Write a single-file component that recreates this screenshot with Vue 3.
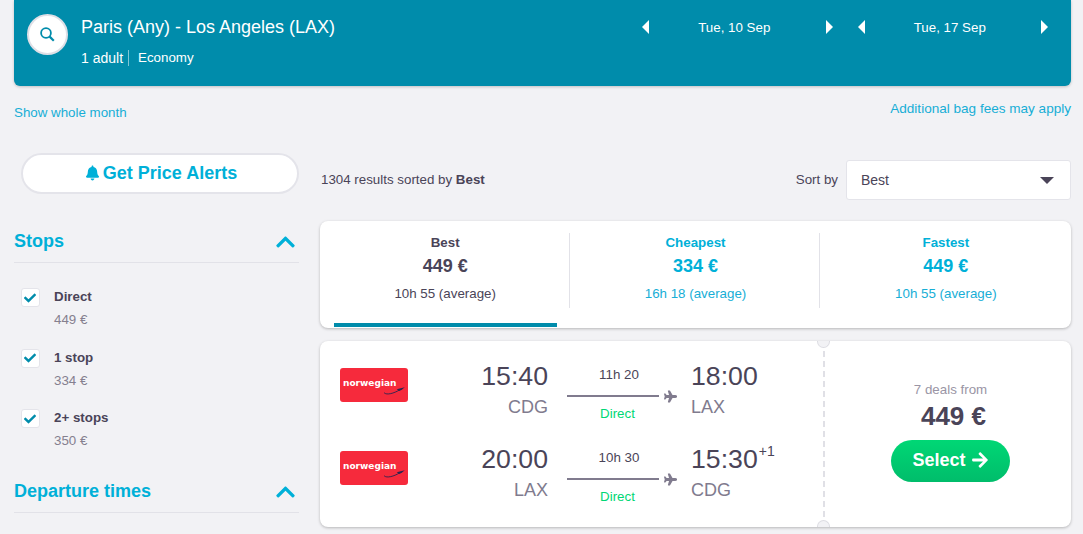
<script setup>
import { ref } from "vue";

const stops = ref([
  { label: "Direct", price: "449 €", checked: true },
  { label: "1 stop", price: "334 €", checked: true },
  { label: "2+ stops", price: "350 €", checked: true },
]);

const activeTab = ref("Best");
const tabs = [
  { name: "Best", price: "449 €", time: "10h 55 (average)" },
  { name: "Cheapest", price: "334 €", time: "16h 18 (average)" },
  { name: "Fastest", price: "449 €", time: "10h 55 (average)" },
];

const dates = ["Tue, 10 Sep", "Tue, 17 Sep"];

const legs = [
  { dep: "15:40", from: "CDG", duration: "11h 20", arr: "18:00", to: "LAX" },
  { dep: "20:00", from: "LAX", duration: "10h 30", arr: "15:30", to: "CDG", plus: "+1" },
];
</script>

<template>
  <div class="page">
    <header class="search-bar">
      <div class="search-left">
        <button class="search-btn" aria-label="Search">
          <svg class="search-icon" viewBox="0 0 15 15">
            <circle cx="6" cy="6" r="4.9" />
            <line x1="9.600" y1="9.600" x2="13.800" y2="13.800" />
          </svg>
        </button>
        <div>
          <div class="route">Paris (Any) - Los Angeles (LAX)</div>
          <div class="trip-info">
            <span class="adults">1 adult</span>
            <span>Economy</span>
          </div>
        </div>
      </div>
      <div class="date-navs">
        <div v-for="date in dates" :key="date" class="date-nav">
          <span class="arrow arrow-left"></span>
          <span class="date-text">{{ date }}</span>
          <span class="arrow arrow-right"></span>
        </div>
      </div>
    </header>

    <div class="sub-links">
      <a class="link month-link">Show whole month</a>
      <a class="link bag-link">Additional bag fees may apply</a>
    </div>

    <div class="columns">
      <!-- Left side -->
      <aside class="sidebar">
        <button class="alerts-btn">
          <svg class="bell" viewBox="0 0 448 512">
            <path d="M224 512c35.32 0 63.97-28.65 63.97-64H160.03c0 35.35 28.65 64 63.97 64zm215.39-149.71c-19.32-20.76-55.47-51.99-55.47-154.29 0-77.7-54.48-139.9-127.94-155.16V32c0-17.67-14.32-32-31.98-32s-31.98 14.33-31.98 32v20.84C118.56 68.1 64.08 130.3 64.08 208c0 102.3-36.15 133.53-55.47 154.29-6 6.45-8.66 14.16-8.61 21.71.11 16.4 12.98 32 32.1 32h383.8c19.12 0 32-15.6 32.1-32 .05-7.55-2.61-15.27-8.61-21.71z" />
          </svg>
          Get Price Alerts
        </button>

        <div class="filter-head stops-head">
          <span>Stops</span>
          <svg class="chevron" viewBox="0 0 448 512">
            <path d="M240.971 130.524l194.343 194.343c9.373 9.373 9.373 24.569 0 33.941l-22.667 22.667c-9.357 9.357-24.522 9.375-33.901.04L224 227.495 69.255 381.516c-9.379 9.335-24.544 9.317-33.901-.04l-22.667-22.667c-9.373-9.373-9.373-24.569 0-33.941L207.03 130.525c9.372-9.373 24.568-9.373 33.941-.001z" />
          </svg>
        </div>

        <ul class="stop-list">
          <li v-for="stop in stops" :key="stop.label" class="stop-item">
            <span class="checkbox">
              <svg v-if="stop.checked" class="check" viewBox="0 0 512 512">
                <path d="M173.898 439.404l-166.4-166.4c-9.997-9.997-9.997-26.206 0-36.204l36.203-36.204c9.997-9.998 26.207-9.998 36.204 0L192 312.69 432.095 72.596c9.997-9.997 26.207-9.997 36.204 0l36.203 36.204c9.997 9.997 9.997 26.206 0 36.204l-294.4 294.401c-9.998 9.997-26.207 9.997-36.204-.001z" />
              </svg>
            </span>
            <div class="stop-text">
              <div class="stop-label">{{ stop.label }}</div>
              <div class="stop-price">{{ stop.price }}</div>
            </div>
          </li>
        </ul>

        <div class="filter-head">
          <span>Departure times</span>
          <svg class="chevron" viewBox="0 0 448 512">
            <path d="M240.971 130.524l194.343 194.343c9.373 9.373 9.373 24.569 0 33.941l-22.667 22.667c-9.357 9.357-24.522 9.375-33.901.04L224 227.495 69.255 381.516c-9.379 9.335-24.544 9.317-33.901-.04l-22.667-22.667c-9.373-9.373-9.373-24.569 0-33.941L207.03 130.525c9.372-9.373 24.568-9.373 33.941-.001z" />
          </svg>
        </div>
      </aside>

      <!-- Right side -->
      <main class="results">
        <div class="results-top">
          <div class="count">1304 results sorted by <b>Best</b></div>
          <div class="sort">
            <span class="sort-label">Sort by</span>
            <div class="select">
              <span>Best</span>
              <span class="caret"></span>
            </div>
          </div>
        </div>

        <div class="tabs">
          <div
            v-for="tab in tabs"
            :key="tab.name"
            class="tab"
            :class="{ active: tab.name === activeTab }"
            @click="activeTab = tab.name"
          >
            <div class="tab-name">{{ tab.name }}</div>
            <div class="tab-price">{{ tab.price }}</div>
            <div class="tab-time">{{ tab.time }}</div>
          </div>
        </div>

        <div class="ticket">
          <div class="legs">
            <div v-for="leg in legs" :key="leg.dep" class="leg">
              <div class="airline">
                <span class="airline-name">norwegian</span>
                <svg class="swoosh" viewBox="0 0 24 10">
                  <path d="M1 7.500C4 10.500 12 8 18 4.500" fill="none" stroke="#2a2550" stroke-width="1" />
                  <path d="M15 3.500L24 1.500L21 4L18 5.500Z" fill="#2a2550" />
                </svg>
              </div>
              <div class="place place-dep">
                <div class="time">{{ leg.dep }}</div>
                <div class="code">{{ leg.from }}</div>
              </div>
              <div class="middle">
                <div class="duration">{{ leg.duration }}</div>
                <div class="track">
                  <span class="track-line"></span>
                  <svg class="plane" viewBox="0 0 576 512">
                    <path d="M480 192H365.71L260.61 8.06A16.014 16.014 0 0 0 246.71 0h-65.5c-10.63 0-18.3 10.17-15.38 20.39L214.86 192H112l-43.2-57.6c-3.02-4.03-7.77-6.4-12.8-6.4H16.01C5.6 128-2.04 137.78.49 147.88L32 256 .49 364.12C-2.04 374.22 5.6 384 16.01 384H56c5.04 0 9.78-2.37 12.8-6.4L112 320h102.86l-49.03 171.6c-2.92 10.22 4.75 20.4 15.38 20.4h65.5c5.74 0 11.04-3.08 13.89-8.06L365.71 320H480c35.35 0 96-28.65 96-64s-60.65-64-96-64z" />
                  </svg>
                </div>
                <div class="direct">Direct</div>
              </div>
              <div class="place">
                <div class="time">{{ leg.arr }}<sup v-if="leg.plus" class="plus">{{ leg.plus }}</sup></div>
                <div class="code">{{ leg.to }}</div>
              </div>
            </div>
          </div>

          <div class="deal">
            <span class="notch notch-top"></span>
            <span class="notch notch-bottom"></span>
            <div class="deal-count">7 deals from</div>
            <div class="deal-price">449 €</div>
            <button class="select-btn">
              Select
              <svg class="btn-arrow" viewBox="0 0 448 512">
                <path d="M190.5 66.9l22.2-22.2c9.4-9.4 24.6-9.4 33.9 0L441 239c9.4 9.4 9.4 24.6 0 33.9L246.6 467.3c-9.4 9.4-24.6 9.4-33.9 0l-22.2-22.2c-9.5-9.5-9.3-25 .4-34.3L311.4 296H24c-13.3 0-24-10.7-24-24v-32c0-13.3 10.7-24 24-24h287.4L190.9 101.2c-9.8-9.3-10-24.8-.4-34.3z" />
              </svg>
            </button>
          </div>
        </div>
      </main>
    </div>
  </div>
</template>

<style>
html,
body {
  margin: 0;
  background: #f2f2f5;
  overflow: hidden;
}
</style>

<style scoped>
.page {
  box-sizing: border-box;
  width: 1083px;
  height: 534px;
  padding: 0 12px 0 14px;
  overflow: hidden;
  background: #f2f2f5;
  color: #4a4458;
  font-family: "Liberation Sans", Arial, sans-serif;
  font-size: 13.33px;
}

button {
  font-family: inherit;
  cursor: pointer;
}

/* Top search summary */
.search-bar {
  display: flex;
  justify-content: space-between;
  height: 86px;
  background: #008cab;
  border-radius: 0 0 6px 6px;
  box-shadow: 0 1px 3px rgba(0, 0, 0, 0.2);
  color: #fff;
}

.search-left {
  display: flex;
  padding: 14px 0 0 13px;
}

.search-btn {
  display: flex;
  align-items: center;
  justify-content: center;
  width: 41px;
  height: 41px;
  margin-right: 13px;
  padding: 0;
  background: #fff;
  border: 2px solid #dfdfe6;
  border-radius: 50%;
}

.search-icon {
  width: 15px;
  height: 15px;
  fill: none;
  stroke: #008cab;
  stroke-width: 1.8;
}

.search-icon line {
  stroke-width: 2.2;
}

.route {
  font-size: 18px;
  line-height: 26px;
}

.trip-info {
  display: flex;
  margin-top: 10px;
  line-height: 16px;
}

.adults {
  margin-right: 9px;
  padding-right: 5px;
  border-right: 1px solid rgba(255, 255, 255, 0.5);
  font-size: 14px;
}

.date-navs {
  display: flex;
  gap: 25px;
  padding: 19px 23px 0 0;
}

.date-nav {
  display: flex;
  align-items: center;
  justify-content: space-between;
  width: 190.5px;
  height: 16px;
}

.date-text {
  padding-right: 6px;
}

.arrow {
  width: 0;
  height: 0;
  border-top: 7px solid transparent;
  border-bottom: 7px solid transparent;
}

.arrow-left {
  border-right: 7px solid #fff;
}

.arrow-right {
  border-left: 7px solid #fff;
}

.sub-links {
  display: flex;
  justify-content: space-between;
  height: 46px;
  padding-top: 15px;
  box-sizing: border-box;
}

.link {
  color: #17aed6;
  line-height: 16px;
}

.month-link {
  padding-top: 4px;
}

.bag-link {
  font-size: 13.55px;
}

.columns {
  display: flex;
  gap: 21px;
  padding-top: 21px;
}

/* Filters */
.sidebar {
  flex: none;
  width: 285px;
}

.alerts-btn {
  display: flex;
  align-items: center;
  justify-content: center;
  gap: 4px;
  box-sizing: border-box;
  width: 278px;
  height: 41px;
  margin-left: 6.5px;
  padding: 0 0 1px 4px;
  background: #fff;
  border: 2px solid #e4e4ea;
  border-radius: 21px;
  color: #00b0d8;
  font-size: 18px;
  font-weight: 700;
}

.bell {
  width: 13px;
  height: 16px;
  fill: #00b0d8;
}

.filter-head {
  display: flex;
  align-items: center;
  justify-content: space-between;
  height: 42px;
  padding-right: 4px;
  border-bottom: 1px solid #e2e2e8;
  color: #00b0d8;
  font-size: 18px;
  font-weight: 700;
}

.stops-head {
  margin-top: 26px;
}

.chevron {
  width: 19px;
  height: 22px;
  margin-top: 2px;
  fill: #00b0d8;
}

.stop-list {
  box-sizing: border-box;
  height: 207px;
  margin: 0;
  padding: 25px 0 0;
  list-style: none;
}

.stop-item {
  display: flex;
  height: 60.5px;
  padding-left: 6.5px;
}

.stop-text {
  padding-top: 1px;
}

.checkbox {
  display: flex;
  flex: none;
  align-items: center;
  justify-content: center;
  box-sizing: border-box;
  width: 19px;
  height: 19px;
  margin-right: 14.5px;
  background: #fff;
  border: 1px solid #e4e4ea;
  border-radius: 3px;
}

.check {
  width: 12px;
  height: 12px;
  fill: #008cab;
}

.stop-label {
  font-weight: 700;
  line-height: 16px;
}

.stop-price {
  margin-top: 7px;
  color: #85808f;
  line-height: 16px;
}

/* Results */
.results {
  flex: none;
  width: 751px;
}

.results-top {
  display: flex;
  align-items: center;
  justify-content: space-between;
  height: 47px;
  margin-top: 3px;
  padding-left: 1px;
}

.count b {
  font-weight: 700;
}

.sort {
  display: flex;
  align-items: center;
  gap: 8px;
}

.select {
  display: flex;
  align-items: center;
  justify-content: space-between;
  box-sizing: border-box;
  width: 225px;
  height: 40px;
  padding: 0 16px 0 14px;
  background: #fff;
  border: 1px solid #e4e4ea;
  border-radius: 3px;
  font-size: 14px;
}

.caret {
  width: 0;
  height: 0;
  margin-top: 2px;
  border-top: 7px solid #4a4458;
  border-left: 7px solid transparent;
  border-right: 7px solid transparent;
}

.tabs {
  display: flex;
  box-sizing: border-box;
  height: 107px;
  margin-top: 18px;
  background: #fff;
  border-radius: 8px;
  box-shadow: 0 1px 3px rgba(0, 0, 0, 0.25);
}

.tab {
  position: relative;
  flex: 1;
  padding-top: 14px;
  color: #00b0d8;
  text-align: center;
  cursor: pointer;
}

.tab + .tab::before {
  content: "";
  position: absolute;
  top: 12px;
  left: -1px;
  height: 75px;
  border-left: 1px solid #e2e2e8;
}

.tab:last-child::before {
  left: -2px;
}

.tab.active {
  color: #4a4458;
}

.tab.active::after {
  content: "";
  position: absolute;
  left: 14px;
  right: 13px;
  bottom: 1px;
  height: 4px;
  background: #008cab;
}

.tab-name {
  font-weight: 700;
  line-height: 16px;
}

.tab-price {
  margin-top: 4px;
  font-size: 18px;
  font-weight: 700;
  line-height: 22px;
}

.tab-time {
  margin-top: 9px;
  line-height: 16px;
}

.tab:not(.active) .tab-time {
  color: #17aed6;
}

/* Flight card */
.ticket {
  display: flex;
  height: 186px;
  margin-top: 13px;
  background: #fff;
  border-radius: 8px;
  box-shadow: 0 1px 3px rgba(0, 0, 0, 0.25);
}

.legs {
  flex: none;
  box-sizing: border-box;
  width: 503px;
  padding-top: 15px;
}

.leg {
  display: flex;
  height: 83px;
}

.airline {
  position: relative;
  flex: none;
  width: 68px;
  height: 34px;
  margin: 12px 0 0 20px;
  background: #f62a3c;
  border-radius: 3px;
  color: #fff;
}

.airline-name {
  position: absolute;
  top: 10px;
  left: 3px;
  font-family: "DejaVu Sans", sans-serif;
  font-size: 9px;
  font-weight: 700;
  line-height: 10px;
  white-space: nowrap;
}

.swoosh {
  position: absolute;
  top: 18px;
  left: 43px;
  width: 22px;
  height: 9px;
}

.place-dep {
  width: 140px;
  margin-right: 19px;
  text-align: right;
}

.time {
  font-size: 26.67px;
  line-height: 40px;
  white-space: nowrap;
}

.plus {
  position: relative;
  top: -12px;
  margin-left: 1px;
  font-size: 14px;
  line-height: 0;
  vertical-align: baseline;
}

.code {
  margin-top: 1px;
  color: #807b8e;
  font-size: 18px;
  line-height: 20px;
}

.middle {
  flex: none;
  box-sizing: border-box;
  width: 110px;
  margin-right: 14px;
  padding-top: 10px;
}

.duration {
  padding-right: 6px;
  line-height: 18px;
  text-align: center;
}

.track {
  display: flex;
  align-items: center;
  gap: 5px;
  height: 16px;
  margin-top: 4px;
}

.track-line {
  width: 92px;
  height: 2px;
  background: #807b8e;
}

.plane {
  width: 13.5px;
  height: 13px;
  fill: #807b8e;
}

.direct {
  margin-top: 1px;
  padding-right: 9px;
  color: #00d775;
  line-height: 18px;
  text-align: center;
}

.deal {
  position: relative;
  display: flex;
  flex: 1;
  flex-direction: column;
  align-items: center;
  padding: 41px 0 0 5px;
  border-left: 2px dashed #e0e0e6;
}

.notch {
  position: absolute;
  left: -8px;
  width: 11px;
  height: 6px;
  background: #f2f2f5;
  border: 1px solid #dcdce2;
}

.notch-top {
  top: 0;
  border-top: 0;
  border-radius: 0 0 7px 7px;
}

.notch-bottom {
  bottom: 0;
  border-bottom: 0;
  border-radius: 7px 7px 0 0;
}

.deal-count {
  color: #9a95a5;
  line-height: 16px;
}

.deal-price {
  margin-top: 1px;
  padding-left: 6px;
  font-size: 26px;
  font-weight: 700;
  line-height: 34px;
}

.select-btn {
  display: flex;
  align-items: center;
  justify-content: center;
  gap: 6px;
  width: 119px;
  height: 42px;
  margin-top: 7px;
  padding: 0 1px 2px 0;
  background: linear-gradient(#00d775, #00bd6b);
  border: 0;
  border-radius: 21px;
  color: #fff;
  font-size: 18px;
  font-weight: 700;
}

.btn-arrow {
  width: 16px;
  height: 18px;
  fill: #fff;
}
</style>
